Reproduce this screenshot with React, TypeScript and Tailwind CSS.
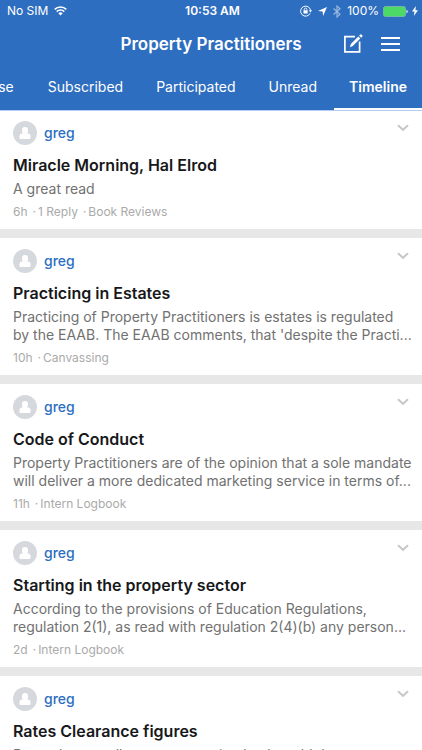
type Post = {
  title: string;
  lines: string[];
  age: string;
  replies?: string;
  category: string;
};

const posts: Post[] = [
  { title: "Miracle Morning, Hal Elrod", lines: ["A great read"], age: "6h", replies: "1 Reply", category: "Book Reviews" },
  {
    title: "Practicing in Estates",
    lines: ["Practicing of Property Practitioners is estates is regulated", "by the EAAB. The EAAB comments, that 'despite the Practi..."],
    age: "10h",
    category: "Canvassing",
  },
  {
    title: "Code of Conduct",
    lines: ["Property Practitioners are of the opinion that a sole mandate", "will deliver a more dedicated marketing service in terms of..."],
    age: "11h",
    category: "Intern Logbook",
  },
  {
    title: "Starting in the property sector",
    lines: ["According to the provisions of Education Regulations,", "regulation 2(1), as read with regulation 2(4)(b) any person..."],
    age: "2d",
    category: "Intern Logbook",
  },
  {
    title: "Rates Clearance figures",
    lines: ["Recently our sellers were surprised to be told that"],
    age: "2d",
    category: "Intern Logbook",
  },
];

function StatusBar() {
  return (
    <div className="grid h-[22px] grid-cols-[1fr_auto_1fr] items-center pr-1 pl-[7px] text-xs">
      <div className="flex items-center gap-1.5">
        <span>No SIM</span>
        <svg width="13" height="10" viewBox="0 0 13 10" fill="none" stroke="currentColor" strokeWidth="1.6">
          <path d="M.7 3.4a8.2 8.2 0 0 1 11.6 0M2.7 5.6a5.4 5.4 0 0 1 7.6 0" />
          <path d="M6.5 9.6 4.3 7.3a3.1 3.1 0 0 1 4.4 0z" fill="currentColor" stroke="none" />
        </svg>
      </div>
      <span className="font-semibold">10:53 AM</span>
      <div className="flex items-center justify-end">
        <svg className="mr-1.5" width="12" height="12" viewBox="0 0 11 11" fill="none" stroke="currentColor">
          <path d="M9.3 7.6A4.6 4.6 0 1 1 9.7 5" strokeWidth=".9" />
          <path d="M8.1 4.7h3L9.6 6.8z" fill="currentColor" stroke="none" />
          <rect x="3.2" y="4.8" width="3.8" height="3" fill="currentColor" stroke="none" />
          <path d="M3.9 5V4a1.2 1.2 0 0 1 2.4 0v1" strokeWidth=".8" />
        </svg>
        <svg className="mr-1.5" width="9" height="9" viewBox="0 0 9 9" fill="currentColor">
          <path d="M9 0 5.1 9 4.6 4.4 0 3.9z" />
        </svg>
        <svg className="mr-1.5 opacity-50" width="8" height="13" viewBox="0 0 8 13" fill="none" stroke="currentColor" strokeWidth="1.2">
          <path d="M.6 3.5 7 9.3 4 12V1l3 2.7L.6 9.5" />
        </svg>
        <span className="mr-1">100%</span>
        <svg className="mr-1" width="25" height="11" viewBox="0 0 25 11">
          <rect x=".5" y=".5" width="22" height="10" rx="2" fill="#4cd964" stroke="#74b6a4" />
          <path d="M23.5 3.8c1.6.4 1.6 3 0 3.4z" fill="#fff" />
        </svg>
        <svg width="6" height="10" viewBox="0 0 6 10" fill="currentColor">
          <path d="M3.9 0 0 5.6h2.5L1.8 10 6 4.2H3.4z" />
        </svg>
      </div>
    </div>
  );
}

function Header() {
  return (
    <header className="relative z-10 bg-[#2e6ec0] text-white shadow-[0_1px_0_#b5cdf0]">
      <StatusBar />
      <div className="grid h-[43px] grid-cols-[1fr_auto_1fr] items-center px-[22px]">
        <h1 className="col-start-2 text-[17px] leading-6 font-semibold">Property Practitioners</h1>
        <div className="flex items-center justify-end gap-[18px]">
          <button type="button" aria-label="New topic">
            <svg width="20" height="19" viewBox="0 0 20 19" fill="none" stroke="currentColor" strokeWidth="1.7">
              <path d="M12 2.6H1.9v15.2H16.6V7.5" />
              <path d="M6.9 13.2 7.8 9.9 15.3 2.4 17.3 4.4 9.8 11.9z" fill="currentColor" stroke="none" />
              <path d="M16.1 1.6 17.3.4Q18 0 18.7.7L19.4 1.4Q19.9 2 19.4 2.6L18.2 3.7z" fill="currentColor" stroke="none" />
            </svg>
          </button>
          <button type="button" aria-label="Menu">
            <svg width="19" height="14" viewBox="0 0 19 14" stroke="currentColor" strokeWidth="2">
              <path d="M0 1h19M0 7h19M0 13h19" />
            </svg>
          </button>
        </div>
      </div>
      <nav className="flex h-[45px] justify-end overflow-hidden text-sm leading-[44px] whitespace-nowrap">
        <a href="#browse" className="mr-5">Browse</a>
        <a href="#subscribed" className="px-[14px]">Subscribed</a>
        <a href="#participated" className="ml-[5px] px-[14px]">Participated</a>
        <a href="#unread" className="ml-[5px] px-[14px]">Unread</a>
        <a href="#timeline" className="ml-[3px] border-b-2 border-white px-[15px] font-semibold">Timeline</a>
      </nav>
    </header>
  );
}

function Card({ post }: { post: Post }) {
  return (
    <article className="border-b-9 border-[#e7e7e7] bg-white px-[13px] pt-[11px] pb-[9px]">
      <div className="flex h-6 items-center">
        <svg width="24" height="24" viewBox="0 0 24 24">
          <circle cx="12" cy="12" r="12" fill="#d5d8dd" />
          <rect x="9" y="6" width="6" height="7" rx="3" fill="#fff" />
          <path d="M6.5 17v-2.2c0-1.8 1.4-2.2 3.5-2.6h4c2.100.4 3.500.8 3.500 2.600V17a1 1 0 0 1-1 1h-9a1 1 0 0 1-1-1z" fill="#fff" />
        </svg>
        <a href="#greg" className="ml-[7px] text-sm font-medium text-[#2e6ec0]">greg</a>
        <button type="button" aria-label="Post options" className="mb-2.5 ml-auto">
          <svg width="12" height="8" viewBox="0 0 12 8" fill="none" stroke="#c8c8c8" strokeWidth="2">
            <path d="m1 1.2 5 4.6 5-4.6" />
          </svg>
        </button>
      </div>
      <h2 className="mt-[8px] text-base leading-6 font-semibold text-[#17181a]">{post.title}</h2>
      <p className="mt-[3px] text-sm leading-[18px] whitespace-nowrap text-[#717171]">
        {post.lines.map((line) => (
          <span key={line} className="block">{line}</span>
        ))}
      </p>
      <p className="mt-[5px] flex gap-[5px] text-xs leading-[17px] text-[#aaaaaa]">
        <span>{post.age}</span>
        {post.replies && (
          <span className="flex gap-0.5">
            <span>·</span>
            <span>{post.replies}</span>
          </span>
        )}
        <span className="flex gap-0.5">
          <span>·</span>
          <span>{post.category}</span>
        </span>
      </p>
    </article>
  );
}

export default function App() {
  return (
    <div className="flex h-screen flex-col overflow-hidden bg-white font-[Inter,'Liberation_Sans',sans-serif]">
      <Header />
      <main className="min-h-0 flex-1 overflow-hidden">
        {posts.map((post) => (
          <Card key={post.title} post={post} />
        ))}
      </main>
    </div>
  );
}
